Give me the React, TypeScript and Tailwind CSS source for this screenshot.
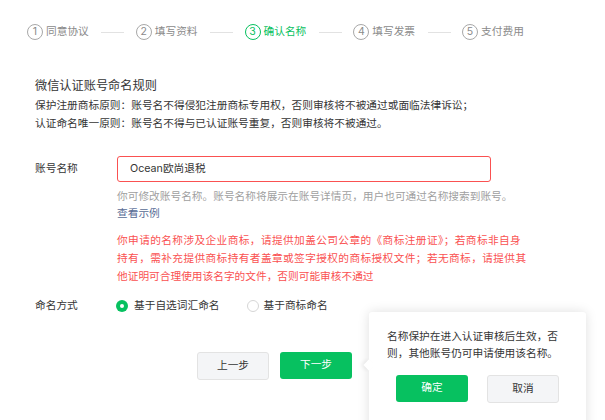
import React from "react";

const steps = ["同意协议", "填写资料", "确认名称", "填写发票", "支付费用"];
const active = 2;

const Step: React.FC<{ n: number; label: string; last: boolean }> = ({ n, label, last }) => {
  const on = n - 1 === active;
  return (
    <div className="flex items-center">
      <span
        className={
          on
            ? "flex h-[16px] w-[16px] items-center justify-center rounded-full border border-[#07c160] text-[10.5px] leading-none text-[#07c160]"
            : "flex h-[16px] w-[16px] items-center justify-center rounded-full border border-[#a8a8a8] text-[10.5px] leading-none text-[#8a8a8a]"
        }
      >
        {n}
      </span>
      <span className={on ? "ml-[3px] text-[#07c160]" : "ml-[3px] text-[#8a8a8a]"}>{label}</span>
      {!last && <span className="ml-[12.5px] mr-[11.5px] h-px w-[23px] bg-[#e2e2e2]" />}
    </div>
  );
};

const warning = [
  "你申请的名称涉及企业商标，请提供加盖公司公章的《商标注册证》；若商标非自身",
  "持有，需补充提供商标持有者盖章或签字授权的商标授权文件；若无商标，请提供其",
  "他证明可合理使用该名字的文件，否则可能审核不通过",
];

export default function App() {
  return (
    <div className="relative h-[420px] w-[605px] overflow-hidden bg-white font-['Inter','Noto_Sans_CJK_SC',sans-serif] text-[10.7px] text-[#353535]">
      {/* Steps */}
      <div className="flex h-[16px] items-center pl-[27px] mt-[24px] leading-[16px]">
        {steps.map((s, i) => (
          <Step key={s} n={i + 1} label={s} last={i === steps.length - 1} />
        ))}
      </div>

      <div className="pl-[35px]">
        {/* Rules */}
        <h2 className="mt-[37px] text-[12.2px] leading-[18px] font-normal">微信认证账号命名规则</h2>
        <div className="mt-[2px] leading-[18px]">
          <p>保护注册商标原则：账号名不得侵犯注册商标专用权，否则审核将不被通过或面临法律诉讼；</p>
          <p>认证命名唯一原则：账号名不得与已认证账号重复，否则审核将不被通过。</p>
        </div>

        {/* Account name */}
        <div className="mt-[23px] flex">
          <div className="w-[82px] leading-[26px]">账号名称</div>
          <div>
            <div className="flex h-[26px] w-[374px] items-center rounded-[3px] border border-[#fa5151] pl-[12px]">
              Ocean欧尚退税
            </div>
            <p className="mt-[6px] leading-[17px] text-[#9f9f9f]">
              你可修改账号名称。账号名称将展示在账号详情页，用户也可通过名称搜索到账号。
            </p>
            <p className="leading-[17px] text-[#576b95]">查看示例</p>
            <div className="mt-[10px] leading-[18px] text-[#fa5151]">
              {warning.map((l, i) => (
                <p key={l} className={i < 2 ? "whitespace-nowrap tracking-[0.38px]" : "whitespace-nowrap"}>
                  {l}
                </p>
              ))}
            </div>
          </div>
        </div>

        {/* Naming method */}
        <div className="mt-[11px] flex h-[18px] items-center">
          <div className="w-[81px]">命名方式</div>
          <label className="flex items-center">
            <span className="flex h-[12px] w-[12px] items-center justify-center rounded-full bg-[#07c160]">
              <span className="h-[4px] w-[4px] rounded-full bg-white" />
            </span>
            <span className="ml-[6px]">基于自选词汇命名</span>
          </label>
          <label className="ml-[27px] flex items-center">
            <span className="h-[12px] w-[12px] rounded-full border border-[#d6d6d6]" />
            <span className="ml-[5px]">基于商标命名</span>
          </label>
        </div>

        {/* Buttons */}
        <div className="mt-[37px] flex gap-[11px] pl-[162px]">
          <button className="h-[28px] w-[72px] rounded-[3px] border border-[#e3e3e3] bg-[#f4f5f7] text-[#353535]">
            上一步
          </button>
          <button className="h-[27px] w-[72px] rounded-[3px] bg-[#07c160] text-white">下一步</button>
        </div>
      </div>

      {/* Popover */}
      <div className="absolute left-[369px] top-[312px] h-[130px] w-[217px] rounded-[3px] bg-white shadow-[0_0_12px_rgba(0,0,0,0.13)]">
        <span className="absolute left-[-4px] top-[49px] h-[8px] w-[8px] rotate-45 bg-white shadow-[-2px_2px_4px_rgba(0,0,0,0.06)]" />
        <p className="relative ml-[18px] mt-[16px] w-[176px] leading-[17px]">
          名称保护在进入认证审核后生效，否则，其他账号仍可申请使用该名称。
        </p>
        <div className="relative mt-[13px] flex justify-center gap-[19px]">
          <button className="h-[27px] w-[72px] rounded-[3px] bg-[#07c160] text-white">确定</button>
          <button className="h-[28px] w-[72px] rounded-[3px] border border-[#e3e3e3] bg-[#f4f5f7] text-[#353535]">
            取消
          </button>
        </div>
      </div>
    </div>
  );
}
